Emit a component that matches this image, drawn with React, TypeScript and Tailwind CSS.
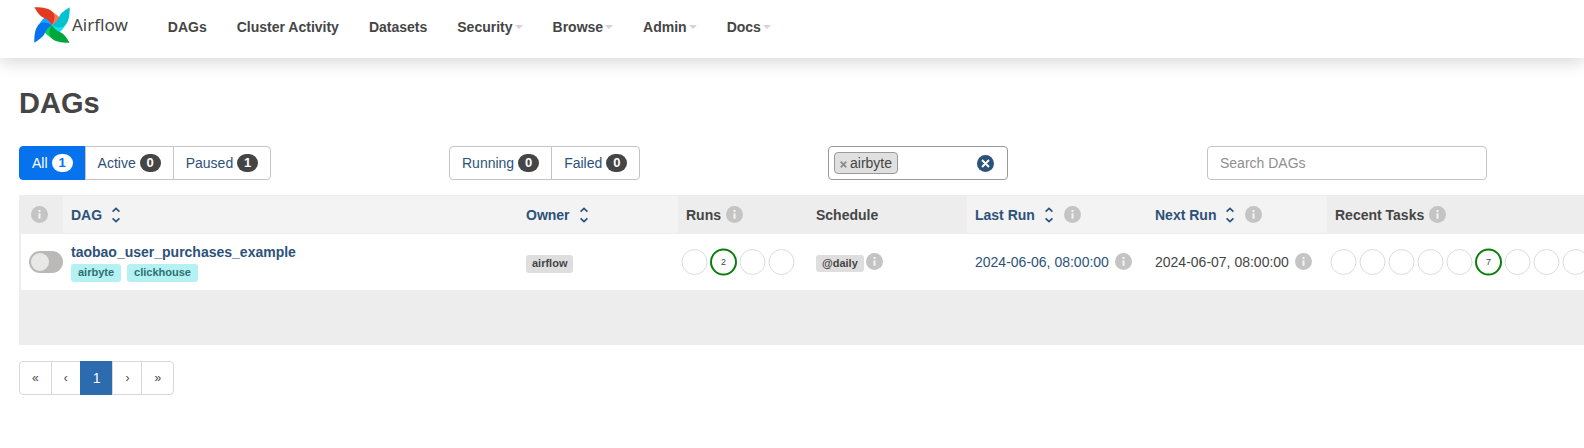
import type { ReactNode } from 'react'

const navItems = [
  { label: 'DAGs', menu: false },
  { label: 'Cluster Activity', menu: false },
  { label: 'Datasets', menu: false },
  { label: 'Security', menu: true },
  { label: 'Browse', menu: true },
  { label: 'Admin', menu: true },
  { label: 'Docs', menu: true },
]

const blades = [
  { turn: 0, main: '#e43921', fold: '#ff7557' },
  { turn: 90, main: '#00c2d1', fold: '#11e1ee' },
  { turn: 180, main: '#00a53c', fold: '#04d659' },
  { turn: 270, main: '#0672ee', fold: '#14a7ff' },
]

function Pinwheel() {
  return (
    <svg viewBox="0 0 36 36" className="size-9 shrink-0" aria-hidden="true">
      {blades.map(({ turn, fold }) => (
        <path key={turn} transform={`rotate(${turn} 18 18)`} d="M19 5.500C22 7 24.500 9 25.700 11.200C24.500 14.500 21.500 17 18 18Z" fill={fold} />
      ))}
      {blades.map(({ turn, main }) => (
        <path
          key={turn}
          transform={`rotate(${turn} 18 18)`}
          d="M0.300 0.300C9 0.200 15.500 1.300 19.500 5.800C21.300 9.500 20.500 14 18 18C15.500 14 13 12 9.700 10.800C5.500 9 3 4.500 0.300 0.300Z"
          fill={main}
        />
      ))}
    </svg>
  )
}

function Info({ label }: { label: string }) {
  return (
    <svg viewBox="0 0 17 17" role="img" aria-label={label} className="size-[17px] shrink-0">
      <circle cx="8.500" cy="8.500" r="8.500" fill="#c4c4c4" />
      <rect x="7.500" y="4" width="2" height="2" fill="#f3f3f3" />
      <rect x="7.500" y="7.300" width="2" height="5.500" fill="#f3f3f3" />
    </svg>
  )
}

function SortIcon() {
  return (
    <svg viewBox="0 0 8 16" className="h-4 w-2 shrink-0" fill="none" stroke="currentColor" strokeWidth="1.700" aria-hidden="true">
      <path d="M0.600 4.700L4 1.400L7.400 4.700M0.600 11.300L4 14.600L7.400 11.300" />
    </svg>
  )
}

function Heading({ children, info, sortable = false }: { children?: ReactNode; info?: string; sortable?: boolean }) {
  return (
    <th className={`h-[38px] border-y border-[#ededed] px-2 text-left font-bold ${sortable ? 'bg-[#f3f3f3] text-[#2c5279]' : 'bg-[#ededed]'}`}>
      <div className="flex items-center">
        {sortable ? (
          <a href="#sort" className="flex items-center gap-2.5">
            {children}
            <SortIcon />
          </a>
        ) : (
          children
        )}
        {info && (
          <span className={sortable ? 'ml-[11px]' : children ? 'ml-[5px]' : 'ml-[3px]'}>
            <Info label={info} />
          </span>
        )}
      </div>
    </th>
  )
}

function Circles({ total, active, count }: { total: number; active: number; count: number }) {
  return (
    <svg width={total * 29} height="28" className="max-w-none" fill="none">
      {Array.from({ length: total }, (_, i) => (
        <circle
          key={i}
          cx={14.5 + i * 29}
          cy="14"
          r="12.5"
          stroke={i === active ? '#0a7d0a' : '#dcdcdc'}
          strokeWidth={i === active ? 2 : 1}
        />
      ))}
      <text x={14.5 + active * 29} y="17" textAnchor="middle" fill="#454545" fontSize="9">
        {count}
      </text>
    </svg>
  )
}

function FilterGroup({ items, selected }: { items: { label: string; count: number }[]; selected?: string }) {
  return (
    <div className="flex">
      {items.map(({ label, count }) => {
        const on = label === selected
        return (
          <button
            key={label}
            type="button"
            className={`-ml-px flex h-[34px] items-center gap-1 border px-3 first:ml-0 first:rounded-l last:rounded-r ${
              on ? 'border-[#0672ee] bg-[#0672ee] text-white' : 'border-[#c4c4c4] bg-white text-[#2c5279]'
            }`}
          >
            {label}
            <span
              className={`flex h-[18px] w-[21px] items-center justify-center rounded-full text-[13px] font-bold ${
                on ? 'bg-white text-[#0672ee]' : 'bg-[#454545] text-white'
              }`}
            >
              {count}
            </span>
          </button>
        )
      })}
    </div>
  )
}

function Pagination() {
  return (
    <nav aria-label="Pages" className="mt-4 flex h-[34px] w-fit text-xs">
      {['«', '‹', '1', '›', '»'].map((mark) => (
        <a
          key={mark}
          href={`#page-${mark}`}
          className={`-ml-px flex items-center justify-center border px-3 first:ml-0 first:rounded-l last:rounded-r ${
            mark === '1' ? 'border-[#2c6bad] bg-[#2c6bad] text-sm text-white' : 'border-[#d8d8d8] bg-white'
          }`}
        >
          {mark}
        </a>
      ))}
    </nav>
  )
}

export default function App() {
  return (
    <div className="min-h-screen overflow-x-hidden bg-white font-['Liberation_Sans',Arial,sans-serif] text-sm text-[#454545]">
      <header className="flex h-[58px] items-center bg-white pb-1 pl-[34px] shadow-[0_4px_16px_rgba(0,0,0,0.16)]">
        <a href="#home" className="mb-1 flex items-center gap-0.5">
          <Pinwheel />
          <span className="font-['Noto_Sans',sans-serif] text-[17px]">Airflow</span>
        </a>
        <nav className="ml-10 flex gap-[30px] font-bold">
          {navItems.map(({ label, menu }) => (
            <a key={label} href={`#${label}`} className="flex items-center gap-0.5">
              {label}
              {menu && (
                <svg viewBox="0 0 8 4" className="h-1 w-2 shrink-0" fill="#e0cce2" aria-hidden="true">
                  <path d="M0 0H8L4 4Z" />
                </svg>
              )}
            </a>
          ))}
        </nav>
      </header>

      <main className="pl-[19px]">
        <h1 className="mt-[29px] text-[29px] leading-8 font-bold">DAGs</h1>

        <div className="mt-[27px] grid grid-cols-[430fr_379fr_379fr_377fr]">
          <FilterGroup
            selected="All"
            items={[
              { label: 'All', count: 1 },
              { label: 'Active', count: 0 },
              { label: 'Paused', count: 1 },
            ]}
          />
          <FilterGroup
            items={[
              { label: 'Running', count: 0 },
              { label: 'Failed', count: 0 },
            ]}
          />
          <div className="flex h-[34px] w-[180px] items-center justify-between rounded border border-[#9a9a9a] pr-[13px] pl-[5px]">
            <span className="flex h-[22px] items-center gap-[3px] rounded border border-[#9a9a9a] bg-[#e0e0e0] px-[5px]">
              <button type="button" aria-label="Remove airbyte" className="text-[#8c8c8c]">
                <svg viewBox="0 0 7 7" className="mt-0.5 size-[7px]" stroke="currentColor" strokeWidth="1.800" aria-hidden="true">
                  <path d="M0.700 0.700L6.300 6.300M6.300 0.700L0.700 6.300" />
                </svg>
              </button>
              airbyte
            </span>
            <button type="button" aria-label="Clear tags">
              <svg viewBox="0 0 17 17" className="size-[17px]" aria-hidden="true">
                <circle cx="8.500" cy="8.500" r="8.500" fill="#2c5279" />
                <path d="M5 5L12 12M12 5L5 12" stroke="#fff" strokeWidth="1.900" />
              </svg>
            </button>
          </div>
          <input
            type="search"
            aria-label="Search DAGs"
            placeholder="Search DAGs"
            className="h-[34px] w-[280px] rounded border border-[#c4c4c4] px-3 placeholder:text-[#8f8f8f]"
          />
        </div>

        <div className="mt-[15px] bg-[#ededed] pb-[55px]">
          <table className="w-full table-fixed border-collapse">
            <colgroup>
              <col className="w-[43px]" />
              <col />
              <col className="w-40" />
              <col className="w-[130px]" />
              <col className="w-[159px]" />
              <col className="w-[180px]" />
              <col className="w-[180px]" />
              <col className="w-[257px]" />
            </colgroup>
            <thead>
              <tr>
                <Heading info="Pause or unpause" />
                <Heading sortable>DAG</Heading>
                <Heading sortable>Owner</Heading>
                <Heading info="Run states">Runs</Heading>
                <Heading>Schedule</Heading>
                <Heading sortable info="Last run">Last Run</Heading>
                <Heading sortable info="Next run">Next Run</Heading>
                <Heading info="Task states">Recent Tasks</Heading>
              </tr>
            </thead>
            <tbody>
              <tr className="h-14 bg-white">
                <td className="border-l-2 border-[#ededed] pl-2">
                  <label className="flex">
                    <input type="checkbox" aria-label="Unpause DAG" className="peer sr-only" />
                    <span className="flex h-[22px] w-[34px] rounded-full bg-[#bbb9b8] p-0.5 peer-checked:justify-end">
                      <span className="size-[18px] rounded-full bg-[#e8e8e8]" />
                    </span>
                  </label>
                </td>
                <td className="px-2">
                  <a href="#dag" className="block leading-5 font-bold text-[#2c5279]">
                    taobao_user_purchases_example
                  </a>
                  <div className="mt-0.5 flex gap-1.5 text-[11px] font-bold text-[#2a7371]">
                    {['airbyte', 'clickhouse'].map((tag) => (
                      <a key={tag} href={`#${tag}`} className="flex h-[18px] items-center rounded-[3px] bg-[#b5f0f2] px-[7px]">
                        {tag}
                      </a>
                    ))}
                  </div>
                </td>
                <td className="px-2">
                  <a href="#owner" className="mt-1 flex h-[18px] w-fit items-center rounded-[3px] bg-[#dedede] px-1.5 text-[11px] font-bold">
                    airflow
                  </a>
                </td>
                <td className="pl-0.5">
                  <Circles total={4} active={1} count={2} />
                </td>
                <td className="px-2">
                  <div className="flex items-center gap-0.5">
                    <a href="#schedule" className="mt-1 flex h-[17px] items-center rounded-[3px] bg-[#dedede] px-1.5 text-[11px] font-bold">
                      @daily
                    </a>
                    <Info label="Schedule details" />
                  </div>
                </td>
                <td className="px-2">
                  <div className="flex items-center gap-1.5">
                    <a href="#last-run" className="text-[#2c5279]">2024-06-06, 08:00:00</a>
                    <Info label="Last run details" />
                  </div>
                </td>
                <td className="px-2">
                  <div className="flex items-center gap-1.5">
                    <time>2024-06-07, 08:00:00</time>
                    <Info label="Next run details" />
                  </div>
                </td>
                <td className="overflow-hidden pl-0.5">
                  <Circles total={14} active={5} count={7} />
                </td>
              </tr>
            </tbody>
          </table>
        </div>

        <Pagination />
      </main>
    </div>
  )
}
